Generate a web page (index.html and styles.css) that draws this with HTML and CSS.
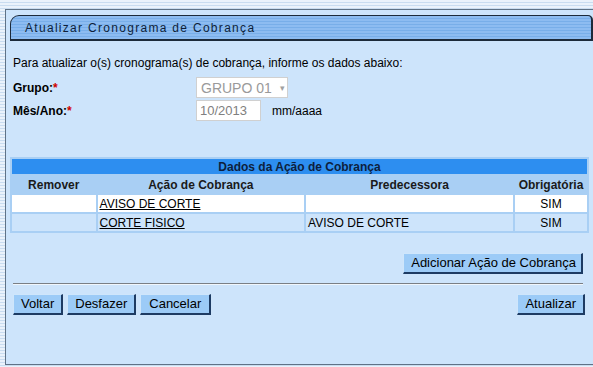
FILE: index.html
```html
<!DOCTYPE html>
<html>
<head>
<meta charset="utf-8">
<link rel="stylesheet" href="styles.css">
</head>
<body>
<div class="panel">
  <div class="titlebar">Atualizar Cronograma de Cobrança</div>
  <div class="content">
    <p class="intro">Para atualizar o(s) cronograma(s) de cobrança, informe os dados abaixo:</p>
    <div class="fields">
      <div class="field">
        <label class="lbl">Grupo:<span class="req">*</span></label>
        <div class="select"><span>GRUPO 01</span><span class="arrow">&#9662;</span></div>
      </div>
      <div class="field">
        <label class="lbl">Mês/Ano:<span class="req">*</span></label>
        <div class="input">10/2013</div>
        <span class="hint">mm/aaaa</span>
      </div>
    </div>
    <table class="grid">
      <tr><th colspan="4" class="caption">Dados da Ação de Cobrança</th></tr>
      <tr class="head">
        <th class="c1">Remover</th>
        <th class="c2">Ação de Cobrança</th>
        <th class="c3">Predecessora</th>
        <th class="c4">Obrigatória</th>
      </tr>
      <tr class="odd">
        <td></td>
        <td><a href="#">AVISO DE CORTE</a></td>
        <td></td>
        <td class="center">SIM</td>
      </tr>
      <tr class="even">
        <td></td>
        <td><a href="#">CORTE FISICO</a></td>
        <td>AVISO DE CORTE</td>
        <td class="center">SIM</td>
      </tr>
    </table>
    <div class="addrow"><button class="btn btn-add">Adicionar Ação de Cobrança</button></div>
    <hr class="sep">
    <div class="actions">
      <div class="left">
        <button class="btn">Voltar</button>
        <button class="btn">Desfazer</button>
        <button class="btn btn-cancel">Cancelar</button>
      </div>
      <button class="btn">Atualizar</button>
    </div>
  </div>
</div>
</body>
</html>
```

FILE: styles.css
```css
html, body {
  margin: 0;
  padding: 0;
  height: 100%;
}
body {
  font-family: "Liberation Sans", Arial, sans-serif;
  font-size: 12px;
  color: #000;
  background: repeating-linear-gradient(to bottom, #eaf2fb 0, #eaf2fb 2px, #c9dcf0 2px, #c9dcf0 3px);
  padding: 9px 0 0 5px;
  box-sizing: border-box;
  overflow: hidden;
}
.panel {
  background: #cde4fb;
  border: 1px solid #5f7286;
  border-right: none;
  height: 356px;
  box-sizing: border-box;
  padding-top: 5px;
}
.titlebar {
  margin-left: 4px;
  height: 26px;
  box-sizing: border-box;
  border: 1px solid #1c2a3a;
  border-bottom-width: 2px;
  border-right-width: 2px;
  border-radius: 9px 5px 0 0;
  background: repeating-linear-gradient(to bottom, #8dbcf1 0, #8dbcf1 2px, #78aee9 2px, #78aee9 3px);
  color: #0e1f3a;
  font-size: 12px;
  letter-spacing: 1.3px;
  padding: 5px 0 0 14px;
}
.content {
  padding: 0 4px 0 7px;
}
.intro {
  margin: 14px 0 0 0;
  line-height: 16px;
}
.fields {
  margin-top: 5px;
}
.field {
  display: flex;
  align-items: center;
  height: 23px;
}
.lbl {
  width: 183px;
  font-weight: bold;
}
.req { color: #d00000; }
.select {
  width: 92px;
  height: 21px;
  box-sizing: border-box;
  background: #fff;
  border: 1px solid #d0d0d0;
  color: #9a9a9a;
  font-size: 14px;
  display: flex;
  align-items: center;
  padding-left: 4px;
  gap: 8px;
}
.select .arrow {
  font-size: 9px;
  color: #a0a0a0;
}
.input {
  width: 65px;
  height: 21px;
  box-sizing: border-box;
  background: #fff;
  border: 1px solid #d0d0d0;
  color: #808080;
  font-size: 13px;
  padding: 2px 0 0 3px;
}
.hint {
  margin-left: 11px;
  font-size: 12px;
}
.grid {
  margin-top: 35px;
  width: 579px;
  margin-left: -3px;
  border-spacing: 2px;
  background: #a9cff4;
  font-size: 12px;
}
.grid th, .grid td {
  padding: 0 2px;
  height: 17px;
}
.grid .caption {
  background: #2d8ef0;
  color: #0d1f3d;
  font-weight: bold;
  height: 15px;
  padding: 0;
}
.grid .head th {
  background: #a9cff4;
  color: #1a1a1a;
  font-weight: bold;
}
.c1 { width: 80px; }
.c2 { width: 205px; }
.c3 { width: 205px; }
.c4 { width: 68px; }
.grid .odd td { background: #fff; }
.grid .even td { background: #cde4fb; }
.grid td { text-align: left; }
.grid td.center { text-align: center; }
.grid a { color: #000; text-decoration: underline; }
.addrow {
  display: flex;
  justify-content: flex-end;
  margin-top: 20px;
  padding-right: 6px;
}
.btn {
  font-family: "Liberation Sans", Arial, sans-serif;
  font-size: 13px;
  color: #000;
  background: #9ccbf7;
  border: 1px solid;
  border-color: #cfe6fb #1d3b63 #1d3b63 #cfe6fb;
  border-width: 1px 2px 2px 1px;
  height: 21px;
  padding: 0 7px;
  margin: 0;
  line-height: 16px;
}
.btn-add {
  padding: 0 5px 0 7px;
}
.btn-cancel {
  min-width: 71px;
}
.sep {
  border: none;
  border-top: 1px solid #7a7f85;
  border-bottom: 1px solid #f0f6fc;
  margin: 9px 6px 0 0;
  height: 0;
}
.actions {
  display: flex;
  justify-content: space-between;
  margin-top: 9px;
  padding-right: 4px;
}
.left {
  display: flex;
  gap: 4px;
}
```
